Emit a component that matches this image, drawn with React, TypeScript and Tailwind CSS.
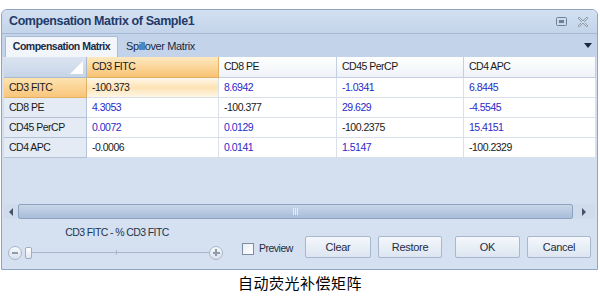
import React from "react";

const cols = ["CD3 FITC", "CD8 PE", "CD45 PerCP", "CD4 APC"];
const rows: { name: string; vals: { v: string; black?: boolean }[] }[] = [
  { name: "CD3 FITC", vals: [{ v: "-100.373", black: true }, { v: "8.6942" }, { v: "-1.0341" }, { v: "6.8445" }] },
  { name: "CD8 PE", vals: [{ v: "4.3053" }, { v: "-100.377", black: true }, { v: "29.629" }, { v: "-4.5545" }] },
  { name: "CD45 PerCP", vals: [{ v: "0.0072" }, { v: "0.0129" }, { v: "-100.2375", black: true }, { v: "15.4151" }] },
  { name: "CD4 APC", vals: [{ v: "-0.0006", black: true }, { v: "0.0141" }, { v: "1.5147" }, { v: "-100.2329", black: true }] },
];

const font = { fontFamily: "'Liberation Sans', Arial, sans-serif" };

function Btn({ label, w }: { label: string; w: string }) {
  return (
    <div
      className={`${w} h-[22px] flex items-center justify-center rounded-[2px] border border-[#a7b7cc] bg-gradient-to-b from-[#f5f8fc] to-[#dce5f1] text-[11px] text-[#1e2c44] tracking-[-0.3px]`}
    >
      {label}
    </div>
  );
}

export default function App() {
  return (
    <div className="w-[600px] h-[297px] bg-white flex flex-col" style={font}>
      <div className="ml-[1px] mt-[9px] w-[597px] h-[261px] rounded-t-[6px] border border-[#8fa4c2] bg-[#d4e0ef] flex flex-col overflow-hidden">
        {/* title bar */}
        <div className="h-[24px] flex items-center justify-between pl-[7px] pr-[9px] bg-gradient-to-b from-[#d3e0f1] to-[#c3d4ea] border-b border-[#a6b9d3]">
          <span className="text-[12.5px] font-bold text-[#1f3a68] tracking-[-0.4px] whitespace-nowrap">Compensation Matrix of Sample1</span>
          <div className="flex items-center gap-[11px]">
            <svg width="11" height="9" viewBox="0 0 11 9">
              <rect x="0.5" y="0.5" width="10" height="8" rx="1" fill="none" stroke="#6f7f95" />
              <rect x="3" y="3" width="5" height="3" fill="#6f7f95" />
            </svg>
            <svg width="10" height="10" viewBox="0 0 10 10">
              <path d="M1 1 L9 9 M9 1 L1 9" stroke="#8c99ab" strokeWidth="2.2" strokeLinecap="round" />
              <path d="M1 1 L9 9 M9 1 L1 9" stroke="#eef2f7" strokeWidth="0.8" strokeLinecap="round" />
            </svg>
          </div>
        </div>
        {/* tab strip */}
        <div className="h-[23px] flex items-end pl-[3px] pr-[5px] bg-[#c3d4ea] relative">
          <div className="h-[21px] w-[113px] flex items-center justify-center bg-[#f2f5fa] border border-b-0 border-[#a9bbd3] rounded-t-[2px] text-[10.5px] font-bold text-[#1a2a44] tracking-[-0.5px] whitespace-nowrap">
            Compensation Matrix
          </div>
          <div className="h-[21px] pl-[8px] flex items-center text-[11px] text-[#1a2a44] tracking-[-0.4px] whitespace-nowrap">Spillover Matrix</div>
          <div className="ml-auto mb-[9px] w-0 h-0 border-l-[4px] border-r-[4px] border-t-[5px] border-l-transparent border-r-transparent border-t-[#1c2a3d]" />
        </div>
        {/* grid area */}
        <div className="px-[2px] flex flex-col flex-1">
          <div className="grid grid-cols-[83px_132px_118px_127px_132px] text-[10.5px] tracking-[-0.5px] whitespace-nowrap">
            <div className="h-[21px] relative bg-gradient-to-b from-[#dce5f1] to-[#c6d4e7] border-r border-b border-[#a9b9cf]">
              <div className="absolute right-[3px] bottom-[3px] w-0 h-0" style={{ borderRight: "13px solid #ffffff", borderTop: "13px solid transparent" }} />
            </div>
            {cols.map((c, i) => (
              <div
                key={c}
                className={`h-[21px] flex items-center pl-[5px] border-r border-b ${
                  i === 0
                    ? "bg-gradient-to-b from-[#fde9bf] to-[#f8c272] border-[#e3b163] text-[#1a1a1a]"
                    : "bg-gradient-to-b from-[#ffffff] to-[#eef2f8] border-[#c4cfdf] text-[#1a1a1a]"
                }`}
              >
                {c}
              </div>
            ))}
            {rows.map((r, ri) => (
              <React.Fragment key={r.name}>
                <div
                  className={`h-[20px] flex items-center pl-[5px] border-r border-b text-[#1a1a1a] ${
                    ri === 0
                      ? "bg-gradient-to-b from-[#fde3b0] to-[#f9c57a] border-[#e3b163]"
                      : "bg-[#e4ebf5] border-[#b3c2d7]"
                  }`}
                >
                  {r.name}
                </div>
                {r.vals.map((v, ci) => (
                  <div
                    key={ci}
                    className={`h-[20px] flex items-center pl-[5px] border-r border-b border-[#d9e0ea] ${
                      ri === 0 && ci === 0
                        ? "bg-gradient-to-b from-[#fff8ea] via-[#fde3b5] to-[#fff6e6]"
                        : "bg-white"
                    } ${v.black ? "text-[#1a1a1a]" : "text-[#2a2ac8]"}`}
                  >
                    {v.v}
                  </div>
                ))}
              </React.Fragment>
            ))}
          </div>
          <div className="flex-1" />
          {/* scrollbar */}
          <div className="h-[15px] flex items-stretch bg-[#d0dcec]">
            <div className="w-[14px] flex items-center justify-center">
              <div className="w-0 h-0 border-t-[4px] border-b-[4px] border-r-[4px] border-t-transparent border-b-transparent border-r-[#44536a]" />
            </div>
            <div className="w-[555px] rounded-[2px] border border-[#8ea3c2] bg-gradient-to-b from-[#c9d6e8] to-[#a9bdd9] flex items-center justify-center">
              <div className="flex gap-[1px]">
                <div className="w-[1px] h-[7px] bg-[#e6edf6]" />
                <div className="w-[1px] h-[7px] bg-[#e6edf6]" />
                <div className="w-[1px] h-[7px] bg-[#e6edf6]" />
              </div>
            </div>
            <div className="flex-1 flex items-center justify-center">
              <div className="w-0 h-0 border-t-[4px] border-b-[4px] border-l-[4px] border-t-transparent border-b-transparent border-l-[#44536a]" />
            </div>
          </div>
        </div>
        {/* bottom panel */}
        <div className="h-[50px] flex items-start bg-[#d5e1f0]">
          <div className="w-[226px] shrink-0 flex flex-col items-start">
            <div className="mt-[6px] w-[230px] text-center text-[10.5px] text-[#24344d] tracking-[-0.6px] whitespace-nowrap">CD3 FITC - % CD3 FITC</div>
            <div className="mt-[5px] ml-[6px] flex items-center h-[14px]">
              <div className="w-[14px] h-[14px] rounded-full border border-[#a9b5c6] bg-gradient-to-b from-[#f7f9fc] to-[#d9e1ec] flex items-center justify-center">
                <div className="w-[6px] h-[1.5px] bg-[#8f9bad]" />
              </div>
              <div className="ml-[3px] w-[7px] h-[12px] rounded-[2px] border border-[#a0adbf] bg-gradient-to-b from-white to-[#e0e7f0]" />
              <div className="w-[177px] h-[1px] bg-[#a9b6c7] relative">
                <div className="absolute left-[84px] -top-[2px] w-[1px] h-[5px] bg-[#a9b6c7]" />
              </div>
              <div className="w-[14px] h-[14px] rounded-full border border-[#a9b5c6] bg-gradient-to-b from-[#f7f9fc] to-[#d9e1ec] flex items-center justify-center relative">
                <div className="w-[7px] h-[1.5px] bg-[#8f9bad]" />
                <div className="absolute w-[1.5px] h-[7px] bg-[#8f9bad]" />
              </div>
            </div>
          </div>
          <div className="mt-[22px] ml-[14px] w-[63px] shrink-0 flex items-center">
            <div className="w-[12px] h-[12px] border border-[#7f8da3] bg-gradient-to-br from-[#e9eef5] to-white" />
            <span className="ml-[5px] text-[10.5px] text-[#1e2c44] tracking-[-0.5px]">Preview</span>
          </div>
          <div className="mt-[17px] flex">
            <Btn label="Clear" w="w-[66px]" />
            <div className="w-[7px]" />
            <Btn label="Restore" w="w-[64px]" />
            <div className="w-[13px]" />
            <Btn label="OK" w="w-[65px]" />
            <div className="w-[7px]" />
            <Btn label="Cancel" w="w-[64px]" />
          </div>
        </div>
      </div>
      <div
        className="flex-1 flex items-center justify-center text-[15px] font-normal text-black tracking-[0.5px]"
        style={{ fontFamily: "'Noto Sans CJK SC', sans-serif" }}
      >
        自动荧光补偿矩阵
      </div>
    </div>
  );
}
